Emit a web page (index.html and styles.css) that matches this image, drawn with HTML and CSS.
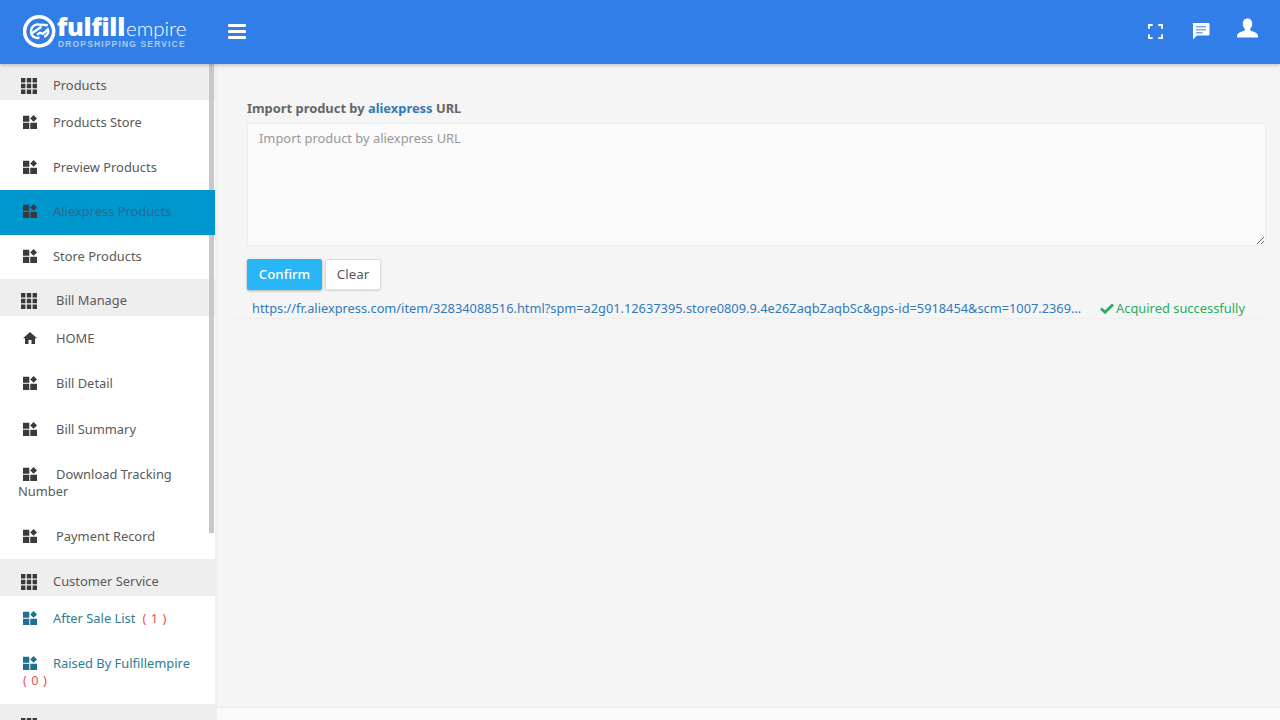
FILE: index.html
```html
<!DOCTYPE html>
<html lang="en">
<head>
<meta charset="utf-8">
<title>Fulfillempire</title>
<link rel="stylesheet" href="styles.css">
</head>
<body>
<svg class="defs" width="0" height="0" aria-hidden="true">
  <symbol id="i-apps" viewBox="0 0 16 16"><path d="M0 0h4.400v4.400H0zM5.800 0h4.400v4.400H5.800zM11.600 0H16v4.400h-4.400zM0 5.800h4.400v4.400H0zM5.800 5.800h4.400v4.400H5.800zM11.600 5.800H16v4.400h-4.400zM0 11.600h4.400V16H0zM5.800 11.600h4.400V16H5.800zM11.600 11.600H16V16h-4.400z"/></symbol>
  <symbol id="i-widget" viewBox="0 0 14 14"><path d="M0 .8h6.300v6H0zM0 7.800h6.300V14H0zM7.300 7.800H14V14H7.300zM10.600 0 14 3.400l-3.400 3.400-3.400-3.400z"/></symbol>
</svg>
<header class="topbar">
  <div class="logo">
    <svg class="logo-mark" viewBox="0 0 34 34"><path d="M27 6.500A15 15 0 1 0 29.500 25" fill="none" stroke="#fff" stroke-width="3.600"/><path d="M29.500 25A15 15 0 0 0 27 6.500" fill="none" stroke="#fff" stroke-width="3.600"/><path d="M25.500 11 14.500 10.200C9.500 11 7.500 15 8.500 19.500 9.500 23 13 24.500 17 24M9.500 19l9.500-6.300M14.500 20.800l3-2 3 1.200 5-4.500c1.200 2.800-.5 6-3.500 7.500" fill="none" stroke="#fff" stroke-width="2.500"/></svg>
    <div class="logo-text">
      <div class="logo-name"><b>fulfill</b><span>empire</span></div>
      <div class="logo-sub">DROPSHIPPING SERVICE</div>
    </div>
  </div>
  <button class="burger" aria-label="Menu"><i></i><i></i><i></i></button>
  <div class="top-icons">
    <svg class="ti-full" viewBox="0 0 16 16" fill="none" stroke="#fff" stroke-width="2"><path d="M1 5V1h4M11 1h4v4M15 11v4h-4M5 15H1v-4"/></svg>
    <svg class="ti-chat" viewBox="0 0 18 18"><path fill="#fff" d="M1.500 1h15a1 1 0 0 1 1 1v10.500a1 1 0 0 1-1 1H5L1 17.500V2a.5 .5 0 0 1 .5-1z"/><path fill="#7aa8ee" d="M4 4h10v1.600H4zM4 7h10v1.600H4zM4 10h6.500v1.500H4z"/></svg>
    <svg class="ti-user" viewBox="0 0 20 18"><path fill="#fff" d="M10 0c2.900 0 4.500 2.100 4.500 4.900 0 2-.8 3.800-1.900 4.800v1.500c.6.800 5.600 1.700 6.900 3.700.4.700.5 2 .5 3.100H0c0-1.100.1-2.400.5-3.100 1.300-2 6.300-2.900 6.900-3.700V9.700C6.300 8.700 5.500 6.900 5.500 4.900 5.500 2.100 7.100 0 10 0z"/></svg>
  </div>
</header>
<div class="body">
  <nav class="sidebar">
    <div class="group"><svg class="ic-apps"><use href="#i-apps"/></svg><span>Products</span></div>
    <a class="item"><svg class="ic"><use href="#i-widget"/></svg><span>Products Store</span></a>
    <a class="item"><svg class="ic"><use href="#i-widget"/></svg><span>Preview Products</span></a>
    <a class="item active up"><svg class="ic"><use href="#i-widget"/></svg><span>Aliexpress Products</span></a>
    <a class="item short up"><svg class="ic"><use href="#i-widget"/></svg><span>Store Products</span></a>
    <div class="group wide tall up"><svg class="ic-apps"><use href="#i-apps"/></svg><span>Bill Manage</span></div>
    <a class="item wide"><svg class="ic" viewBox="0 0 14 14"><path d="M7 1 0 7.300h2V13h3.500V9h3v4H12V7.300h2z"/></svg><span>HOME</span></a>
    <a class="item wide"><svg class="ic"><use href="#i-widget"/></svg><span>Bill Detail</span></a>
    <a class="item wide down"><svg class="ic"><use href="#i-widget"/></svg><span>Bill Summary</span></a>
    <a class="item wide wrap down"><svg class="ic"><use href="#i-widget"/></svg><span>Download Tracking</span><br>Number</a>
    <a class="item wide"><svg class="ic"><use href="#i-widget"/></svg><span>Payment Record</span></a>
    <div class="group tall"><svg class="ic-apps"><use href="#i-apps"/></svg><span>Customer Service</span></div>
    <a class="item teal"><svg class="ic"><use href="#i-widget"/></svg><span>After Sale List</span><em class="count">( 1 )</em></a>
    <a class="item teal wrap2"><svg class="ic"><use href="#i-widget"/></svg><span>Raised By Fulfillempire</span><br><em class="count solo">( 0 )</em></a>
    <div class="group"><svg class="ic-apps"><use href="#i-apps"/></svg><span>Balance Manage</span></div>
    <div class="thumb"></div>
  </nav>
  <main class="main">
    <div class="form">
      <label class="label">Import product by <a class="ali">aliexpress</a> URL</label>
      <textarea class="url" placeholder="Import product by aliexpress URL"></textarea>
      <div class="buttons">
        <button class="btn primary">Confirm</button>
        <button class="btn plain">Clear</button>
      </div>
      <div class="result">
        <a class="result-url">https://fr.aliexpress.com/item/32834088516.html?spm=a2g01.12637395.store0809.9.4e26ZaqbZaqbSc&amp;gps-id=5918454&amp;scm=1007.2369...</a>
        <span class="status"><svg class="check" viewBox="0 0 14 11"><path d="M1 5.500 5 9.300 13 1.500" fill="none" stroke="#27ae60" stroke-width="2.800"/></svg>Acquired successfully</span>
      </div>
    </div>
    <footer class="foot"></footer>
  </main>
</div>
</body>
</html>
```
FILE: styles.css
```css
* { box-sizing: border-box; }
html, body { margin: 0; height: 720px; overflow: hidden; }
body { font-family: "Noto Sans", "Open Sans", sans-serif; font-size: 12.900px; color: #5a5a5a; background: #f5f5f5; display: flex; flex-direction: column; }
.defs { display: block; height: 0; }
.topbar { height: 64px; flex: none; background: #317ee8; display: flex; align-items: center; padding-bottom: 2px; box-shadow: 0 1px 4px rgba(0,0,0,.25); position: relative; z-index: 2; }
.logo { width: 228px; padding-left: 23px; display: flex; align-items: center; gap: 1px; height: 100%; }
.logo-mark { width: 33px; height: 34px; flex: none; }
.logo-text { color: #fff; }
.logo-name { font-size: 24px; line-height: 24px; height: 25px; white-space: nowrap; }
.logo-name b { font-family: "Open Sans", sans-serif; font-weight: 800; font-size: 25px; letter-spacing: -.25px; }
.logo-name span { font-family: "Lato", sans-serif; font-weight: 300; font-size: 20.500px; margin-left: 1px; }
.logo-sub { font-family: "Liberation Sans", sans-serif; font-weight: 700; font-size: 8.500px; letter-spacing: 1.150px; line-height: 10px; color: #a9cbf6; margin-left: 1px; white-space: nowrap; }
.burger { width: 18px; height: 15px; padding: 0; border: 0; background: none; display: flex; flex-direction: column; justify-content: space-between; }
.burger i { display: block; height: 3px; background: #fff; border-radius: 1px; }
.top-icons { margin-left: auto; display: flex; align-items: center; }
.ti-full { width: 15px; height: 15px; margin-right: 29px; }
.ti-chat { width: 18px; height: 18px; margin-right: 27px; }
.ti-user { width: 21px; height: 20px; margin-right: 22px; margin-top: -7px; }
.body { flex: 1; display: flex; min-height: 0; }
.sidebar { width: 217px; flex: none; background: #fff; position: relative; overflow: hidden; border-right: 2px solid #f0f0f0; }
.group { height: 36px; background: #eee; display: flex; align-items: center; padding-left: 21px; padding-top: 6px; }
.group.tall { height: 37px; }
.group.up { padding-top: 4px; }
.group span { margin-left: 16px; }
.group.wide span { margin-left: 19px; }
.ic-apps { width: 16px; height: 16px; fill: #3a3a3a; flex: none; margin-top: 2px; }
.item { display: block; height: 45px; padding: 14px 0 0 18px; line-height: 17px; position: relative; }
.item.short { height: 44px; }
.item.up { padding-top: 13px; }
.item.down { padding-top: 15px; }
.item .ic { width: 14px; height: 14px; fill: #3a3a3a; margin-left: 5px; vertical-align: -2px; }
.item span { margin-left: 16px; }
.item.wide span { margin-left: 19px; }
.item.wrap { height: 63px; }
.item.wrap2 { height: 63px; }
.item.active { background: #0097ce; color: #2a6a90; z-index: 1; }
.item.teal { color: #2e7d96; }
.item.teal .ic { fill: #1f6f92; }
.count { font-style: normal; color: #f05050; margin-left: 7px; letter-spacing: .5px; }
.count.solo { margin-left: 5px; }
.thumb { position: absolute; right: 1px; top: 0; width: 5px; height: 469px; background: #c8c8c8; }
.main { flex: 1; min-width: 0; display: flex; flex-direction: column; }
.form { flex: 1; padding: 35px 14px 0 30px; }
.label { display: block; font-weight: 700; line-height: 18px; margin-bottom: 6px; color: #666; }
.ali { color: #337ab7; }
.url { display: block; width: 100%; height: 123px; padding: 5px 11px; font: 12.900px/18px "Noto Sans", sans-serif; background: #fafafa; border: 1px solid #eee; border-radius: 2px; color: #555; outline: 0; }
.url::placeholder { color: #999; opacity: 1; }
.buttons { display: flex; gap: 3px; margin-top: 13px; }
.btn { height: 31px; font: 13.300px "Noto Sans", sans-serif; border-radius: 2px; padding: 0 0 2px; }
.primary { width: 75px; background: #29b6f6; border: 0; color: #fff; font-weight: 500; box-shadow: 0 1px 3px rgba(0,0,0,.3); }
.plain { width: 56px; background: #fff; border: 1px solid #ddd; color: #5a5a5a; box-shadow: 0 1px 2px rgba(0,0,0,.12); }
.result { display: flex; align-items: flex-end; justify-content: space-between; height: 29px; margin-left: -12px; padding: 0 21px 1px 17px; border-bottom: 1px solid #eee; line-height: 18px; }
.result-url { color: #337ab7; white-space: nowrap; font-size: 12.800px; }
.status { color: #27ae60; white-space: nowrap; display: flex; align-items: center; }
.check { width: 14px; height: 11px; margin-right: 2px; }
.foot { height: 13px; flex: none; background: #fafafa; border-top: 1px solid #eee; }
```
